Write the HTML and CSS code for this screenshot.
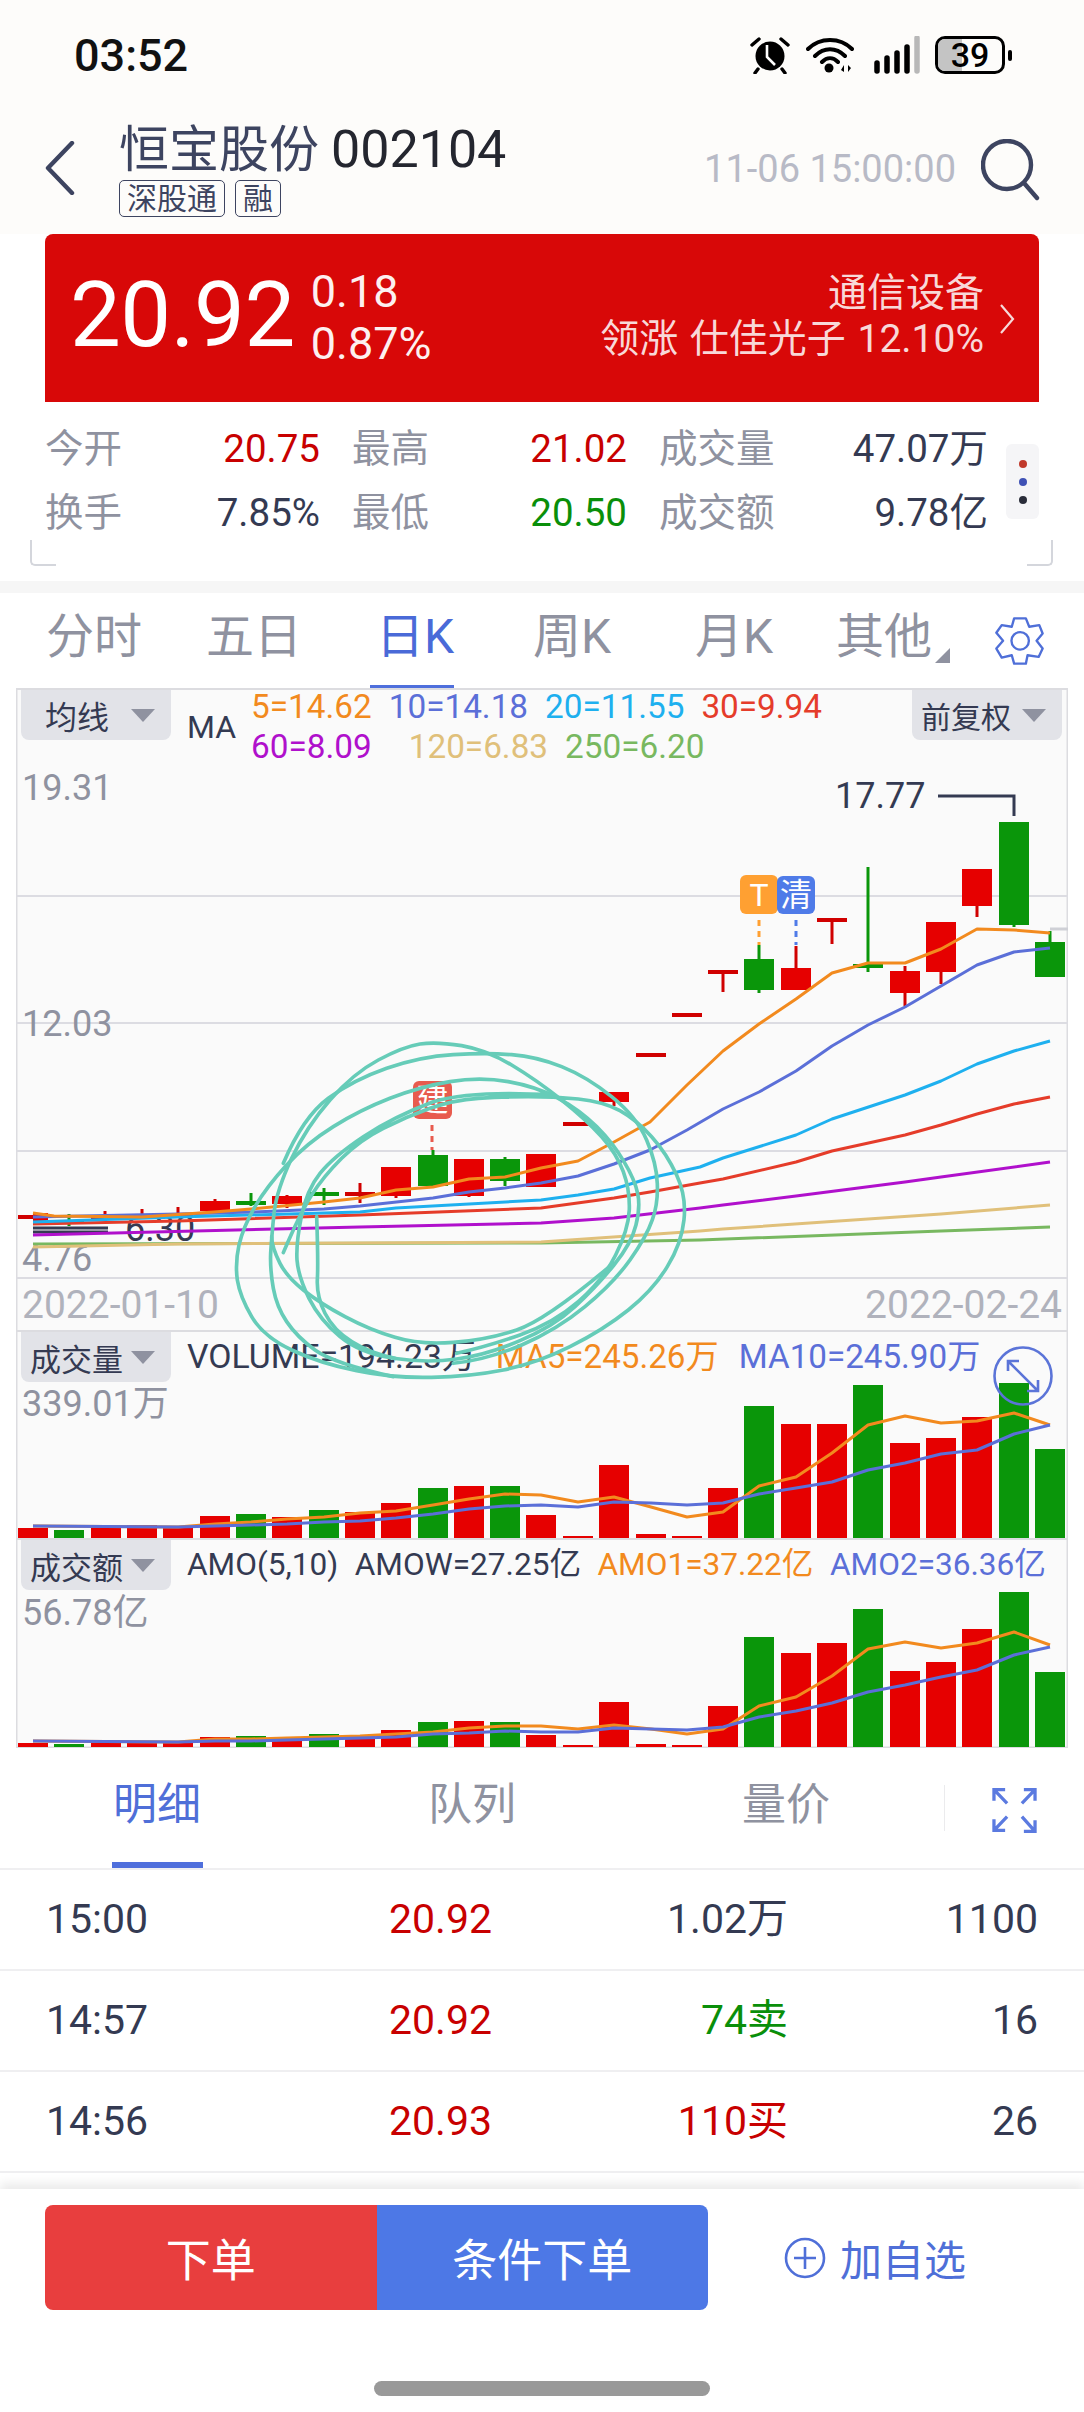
FILE: index.html
```html
<!DOCTYPE html>
<html lang="zh">
<head>
<meta charset="utf-8">
<title>恒宝股份 002104</title>
<link rel="stylesheet" href="styles.css">
</head>
<body>
<div class="page">
  <header class="top">
    <div class="status">
      <span class="clock">03:52</span>
      <div class="status-icons">
        <svg class="ic-alarm" viewBox="0 0 40 38" width="40" height="38">
          <circle cx="20" cy="20" r="14.5" fill="#000"/>
          <path d="M2 9 9 3M38 9 31 3M8 33 5 37M32 33 35 37" stroke="#000" stroke-width="3.4" stroke-linecap="round" fill="none"/>
          <path d="M17 9V21L25 29" stroke="#fff" stroke-width="2.6" fill="none"/>
        </svg>
        <svg class="ic-wifi" viewBox="0 0 48 36" width="48" height="36">
          <path d="M2 12C14 0 34 0 46 12M9 19C18 10 30 10 39 19M16 25C21 20 27 20 32 25" stroke="#000" stroke-width="4" fill="none" stroke-linecap="round"/>
          <circle cx="23" cy="31" r="4.5" fill="#000"/>
          <path d="M35 33 38 28V35ZM42 28 45 31 42 35Z" fill="#000"/>
        </svg>
        <svg class="ic-signal" viewBox="0 0 46 38" width="46" height="38">
          <path class="sig" d="M3 27V35M13 22V35M23 17V35M33 11V35"/>
          <path class="sig sig-off" d="M43 2V35"/>
        </svg>
        <div class="battery">
          <div class="batt-body"><span class="batt-fill"></span><span class="batt-num">39</span></div>
          <span class="batt-nub"></span>
        </div>
      </div>
    </div>
    <div class="nav">
      <svg class="back" viewBox="0 0 30 54" width="30" height="54"><path d="M27 2 3 27 27 52" fill="none" stroke="#3d4460" stroke-width="4.4" stroke-linecap="round" stroke-linejoin="round"/></svg>
      <div class="name-block">
        <div class="name"><span class="name-cn">恒宝股份</span><span class="name-code">002104</span></div>
        <div class="tags"><span class="tag">深股通</span><span class="tag">融</span></div>
      </div>
      <span class="stamp">11-06 15:00:00</span>
      <svg class="search" viewBox="0 0 60 62" width="60" height="62"><circle cx="26" cy="26" r="24" fill="none" stroke="#3d4460" stroke-width="4.4"/><path d="M43 44 56 59" stroke="#3d4460" stroke-width="4.4" stroke-linecap="round"/></svg>
    </div>
  </header>

  <section class="quote">
    <div class="price">20.92</div>
    <div class="change"><span>0.18</span><span>0.87%</span></div>
    <div class="sector"><span>通信设备</span><span class="leader-line">领涨 仕佳光子 12.10%</span></div>
    <svg class="chev" viewBox="0 0 16 32" width="16" height="32"><path d="M2 2 14 16 2 30" fill="none" stroke="#f7d9d9" stroke-width="2.2"/></svg>
  </section>

  <section class="stats">
    <div class="stats-grid">
      <div class="pair"><span class="lbl">今开</span><span class="red">20.75</span></div>
      <div class="pair"><span class="lbl">最高</span><span class="red">21.02</span></div>
      <div class="pair"><span class="lbl">成交量</span><span class="ink">47.07万</span></div>
      <div class="pair"><span class="lbl">换手</span><span class="ink">7.85%</span></div>
      <div class="pair"><span class="lbl">最低</span><span class="green">20.50</span></div>
      <div class="pair"><span class="lbl">成交额</span><span class="ink">9.78亿</span></div>
    </div>
    <div class="dots"><i class="dot d1"></i><i class="dot d2"></i><i class="dot d3"></i></div>
  </section>
  <div class="brackets"><span class="br br-l"></span><span class="br br-r"></span></div>
  <div class="band"></div>

  <nav class="periods">
    <span>分时</span><span>五日</span><span class="on">日K</span><span>周K</span><span>月K</span><span class="more">其他</span>
    <svg class="gear" viewBox="105 45 155 155" width="52" height="52"><polygon points="165,55 200,55 210,80 240,75 250,100 232,122 250,145 238,170 205,165 200,190 165,190 158,165 128,172 112,145 132,122 112,98 128,75 158,80" fill="none" stroke="#4f6fd8" stroke-width="7" stroke-linejoin="round"/><circle cx="183" cy="122" r="26" fill="none" stroke="#4f6fd8" stroke-width="7"/></svg>
  </nav>

  <div class="chart">
    <section class="pane pane-k">
      <svg class="plot" viewBox="16 690 1052 640" width="1052" height="640">
        <path class="grid" d="M16 896H1068M16 1023H1068M16 1151H1068M16 1278H1068"/>
        <path class="grid-now" d="M1050 929H1068"/>
        <text class="axis" x="22" y="800">19.31</text>
        <text class="axis" x="22" y="1036">12.03</text>
        <text class="axis" x="22" y="1271">4.76</text>
        <text class="axis date" x="22" y="1318">2022-01-10</text>
        <text class="axis date" x="1062" y="1318" text-anchor="end">2022-02-24</text>
        <text class="note" x="125" y="1241">6.30</text>
        <path class="leader" d="M33 1228H108M33 1232H108"/>
        <text class="note" x="835" y="808">17.77</text>
        <path class="leader" d="M938 796H1014V816"/>

        <g class="wick-red">
          <path d="M105 1211V1219M142 1209V1217M178 1207V1217M215 1199V1203M287 1195V1208M360 1183V1203M396 1194V1198M469 1194V1197M614 1100V1106M723 971V992M796 946V970M832 919V944M905 966V1006M941 970V984M977 904V917"/>
          <path class="flat" d="M18 1217H48M91 1218H121M127 1216H157M163 1216H193M345 1194H375M563 1124H593M636 1055H666M672 1015H702M708 972H738M817 920H847"/>
        </g>
        <g class="body-red">
          <rect x="33" y="1213" width="15" height="10"/>
          <rect x="200" y="1201" width="30" height="10"/>
          <rect x="272" y="1196" width="30" height="8"/>
          <rect x="381" y="1167" width="30" height="29"/>
          <rect x="454" y="1159" width="30" height="37"/>
          <rect x="526" y="1154" width="30" height="33"/>
          <rect x="599" y="1092" width="30" height="10"/>
          <rect x="781" y="968" width="30" height="22"/>
          <rect x="890" y="971" width="30" height="22"/>
          <rect x="926" y="922" width="30" height="50"/>
          <rect x="962" y="869" width="30" height="37"/>
        </g>
        <g class="wick-green">
          <path d="M69 1214V1226M251 1193V1206M324 1188V1205M433 1150V1156M505 1157V1186M759 945V993M868 867V972M1014 925V927M1050 931V943"/>
          <path class="flat" d="M54 1222H84M236 1203H266M309 1194H339M853 966H883"/>
        </g>
        <g class="body-green">
          <rect x="418" y="1155" width="30" height="31"/>
          <rect x="490" y="1159" width="30" height="22"/>
          <rect x="744" y="959" width="30" height="31"/>
          <rect x="999" y="822" width="30" height="103"/>
          <rect x="1035" y="942" width="30" height="35"/>
        </g>

        <polyline class="ma m250" points="33,1244 541,1243 700,1240 941,1231 1050,1227"/>
        <polyline class="ma m120" points="33,1247 178,1244 541,1242 700,1231 723,1229 941,1214 1050,1205"/>
        <polyline class="ma m60" points="33,1235 360,1227 541,1223 614,1218 700,1208 723,1205 796,1196 905,1182 941,1177 1050,1162"/>
        <polyline class="ma m30" points="33,1224 178,1221 360,1215 541,1208 614,1198 650,1192 700,1183 723,1179 796,1162 832,1151 905,1135 941,1125 977,1114 1014,1104 1050,1097"/>
        <polyline class="ma m20" points="33,1222 178,1217 324,1213 360,1212 396,1208 469,1204 541,1200 578,1195 614,1189 650,1178 700,1167 723,1158 796,1135 832,1119 905,1095 941,1081 977,1064 1014,1051 1050,1041"/>
        <polyline class="ma m10" points="33,1217 178,1214 251,1212 324,1209 360,1206 433,1198 469,1192 505,1188 541,1183 578,1176 614,1164 650,1150 687,1130 723,1109 759,1092 796,1071 832,1046 868,1025 905,1007 941,986 977,965 1014,952 1050,948"/>
        <polyline class="ma m5" points="33,1213 54,1216 142,1217 214,1212 251,1209 324,1202 360,1198 396,1190 433,1187 469,1179 505,1177 541,1168 578,1161 614,1142 650,1122 687,1085 723,1051 759,1024 796,999 832,973 868,963 905,963 941,949 977,929 1014,930 1050,933"/>

        <path class="flag-line l-red" d="M432 1125V1150"/>
        <path class="flag-line l-orange" d="M759 920V945"/>
        <path class="flag-line l-blue" d="M796 920V945"/>
        <rect class="flag f-red" x="413" y="1081" width="39" height="38" rx="6"/>
        <text class="flag-t" x="432.5" y="1111">建</text>
        <rect class="flag f-orange" x="740" y="875" width="38" height="39" rx="6"/>
        <text class="flag-t" x="759" y="906">T</text>
        <rect class="flag f-blue" x="777" y="876" width="38" height="38" rx="6"/>
        <text class="flag-t" x="796" y="906">清</text>

        <g class="scribble" transform="translate(220 1030) scale(.3333)">
          <path d="M190,668 Q240,550 275,495 Q310,440 365,385 Q420,330 490,295 Q560,260 630,235 Q700,210 775,205 Q850,200 925,200 Q1000,200 1075,207 Q1150,215 1200,242 Q1250,270 1295,320 Q1340,370 1370,435 Q1400,500 1392,570 Q1385,640 1342,710 Q1300,780 1225,840 Q1150,900 1050,950 Q950,1000 850,1020 Q750,1040 635,1042 Q520,1045 410,1022 Q300,1000 215,960 Q130,920 95,860 Q60,800 52,750 Q45,700 57,645 Q70,590 105,530 Q140,470 200,405 Q260,340 340,290 Q420,240 510,205 Q600,170 690,155 Q780,140 865,155 Q950,170 1015,205 Q1080,240 1130,290 Q1180,340 1212,395 Q1245,450 1253,490 Q1262,530 1248,585 Q1235,640 1182,705 Q1130,770 1065,830 Q1000,890 900,932 Q800,975 710,987 Q620,1000 520,985 Q420,970 360,920 Q300,870 267,805 Q235,740 231,690 Q228,640 244,560 Q260,480 300,430 Q340,380 430,320 Q520,260 640,215 Q760,180 1000,195"/>
          <path d="M520,1040 Q340,1000 285,960 Q230,920 200,875 Q170,830 160,775 Q150,720 152,670 Q155,620 162,550 Q170,480 215,385 Q260,290 330,210 Q400,130 475,90 Q550,50 600,42 Q650,35 725,47 Q800,60 875,105 Q950,150 1025,210 Q1100,270 1145,320 Q1190,370 1210,425 Q1230,480 1228,540 Q1225,600 1187,675 Q1150,750 1075,815 Q1000,880 900,915 Q800,950 710,970"/>
          <path d="M190,400 Q250,260 325,205 Q400,150 500,115 Q600,80 700,74 Q800,68 875,74 Q950,80 1025,110 Q1100,140 1175,200 Q1250,260 1280,330 Q1310,400 1312,460 Q1315,520 1297,570 Q1280,620 1230,690 Q1180,760 1095,830 Q1010,900 905,945 Q800,990 700,1000"/>
          <path d="M1180,700 Q980,870 890,900 Q800,930 700,937 Q600,945 525,922 Q450,900 375,860 Q300,820 250,780 Q200,740 180,700 Q155,650 155,620"/>
          <path d="M290,560 Q295,700 292,750 Q290,800 315,850 Q340,900 395,935 Q450,970 525,985"/>
        </g>
      </svg>
      <div class="legend">
        <div class="btn btn-wide">均线<i class="tri"></i></div>
        <span class="ma-label">MA</span>
        <div class="ma-vals">
          <div class="ma-row"><span class="c5">5=14.62</span><span class="c10">10=14.18</span><span class="c20">20=11.55</span><span class="c30">30=9.94</span></div>
          <div class="ma-row"><span class="c60">60=8.09</span><span class="c120 push">120=6.83</span><span class="c250">250=6.20</span></div>
        </div>
        <div class="btn btn-right">前复权<i class="tri"></i></div>
      </div>
    </section>

    <section class="pane">
      <svg class="plot" viewBox="16 1332 1052 206" width="1052" height="206">
        <text class="axis" x="22" y="1416">339.01万</text>
        <path class="bar-red" d="M33 1528V1538M106 1527V1538M142 1525V1538M178 1527V1538M215 1516V1538M287 1517V1538M360 1512V1538M396 1503V1538M469 1486V1538M541 1515V1538M578 1536V1538M614 1465V1538M651 1534V1538M687 1536V1538M723 1488V1538M796 1424V1538M832 1424V1538M905 1443V1538M941 1438V1538M977 1417V1538"/>
        <path class="bar-green" d="M69 1530V1538M251 1514V1538M324 1510V1538M433 1488V1538M505 1486V1538M759 1406V1538M868 1385V1538M1014 1383V1538M1050 1449V1538"/>
        <polyline class="ma m5" points="33,1526 178,1527 215,1524 251,1522 287,1519 324,1517 360,1513 396,1511 433,1505 469,1499 505,1494 541,1495 578,1502 614,1497 651,1507 687,1517 723,1512 759,1486 796,1477 832,1453 868,1425 905,1416 941,1423 977,1421 1014,1413 1050,1425"/>
        <polyline class="ma m10" points="33,1526 178,1527 215,1526 251,1525 287,1524 324,1522 360,1521 396,1518 433,1514 469,1509 505,1506 541,1505 578,1507 614,1502 651,1503 687,1505 723,1503 759,1494 796,1488 832,1482 868,1470 905,1463 941,1454 977,1450 1014,1434 1050,1425"/>
        <g class="zoom-ic">
          <circle cx="1023" cy="1376" r="28.5"/>
          <path d="M1008 1361 1038 1391M1008 1371V1361H1019M1038 1380V1391H1027"/>
        </g>
      </svg>
      <div class="legend">
        <div class="btn">成交量<i class="tri"></i></div>
        <div class="inds inds-vol">
          <span class="ink vol-now">VOLUME=194.23万</span><span class="c5">MA5=245.26万</span><span class="c10">MA10=245.90万</span>
        </div>
      </div>
    </section>

    <section class="pane pane-last">
      <svg class="plot" viewBox="16 1540 1052 208" width="1052" height="208">
        <text class="axis" x="22" y="1625">56.78亿</text>
        <path class="bar-red" d="M33 1743V1747M106 1743V1747M142 1743V1747M178 1743V1747M215 1737V1747M287 1738V1747M360 1736V1747M396 1730V1747M469 1721V1747M541 1735V1747M578 1745V1747M614 1702V1747M651 1744V1747M687 1745V1747M723 1706V1747M796 1653V1747M832 1643V1747M905 1671V1747M941 1662V1747M977 1629V1747"/>
        <path class="bar-green" d="M69 1744V1747M251 1736V1747M324 1734V1747M433 1722V1747M505 1722V1747M759 1637V1747M868 1609V1747M1014 1592V1747M1050 1672V1747"/>
        <polyline class="ma m5" points="33,1741 178,1742 215,1739 251,1739 287,1738 324,1737 360,1736 396,1734 433,1732 469,1728 505,1726 541,1726 578,1729 614,1725 651,1729 687,1734 723,1729 759,1706 796,1697 832,1676 868,1649 905,1642 941,1648 977,1643 1014,1632 1050,1645"/>
        <polyline class="ma m10" points="33,1741 178,1742 215,1741 251,1741 287,1740 324,1739 360,1738 396,1737 433,1734 469,1733 505,1731 541,1732 578,1732 614,1728 651,1729 687,1730 723,1727 759,1717 796,1711 832,1703 868,1692 905,1685 941,1677 977,1670 1014,1655 1050,1647"/>
      </svg>
      <div class="legend">
        <div class="btn">成交额<i class="tri"></i></div>
        <div class="inds inds-amo">
          <span class="ink">AMO(5,10)</span><span class="ink">AMOW=27.25亿</span><span class="c5">AMO1=37.22亿</span><span class="c10">AMO2=36.36亿</span>
        </div>
      </div>
    </section>
  </div>

  <nav class="sub-tabs">
    <span class="on">明细</span><span>队列</span><span>量价</span>
    <div class="expand">
      <svg viewBox="160 30 135 140" width="45" height="46"><path d="M205 80 165 38M165 72V38H199M250 80 290 38M290 72V38H256M205 120 165 162M165 128V162H199M250 120 290 165M290 131V165H256" fill="none" stroke="#5b7ae0" stroke-width="10"/></svg>
    </div>
  </nav>

  <div class="ticks">
    <div class="tick"><span class="ink">15:00</span><span class="red">20.92</span><span class="ink">1.02万</span><span class="ink">1100</span></div>
    <div class="tick"><span class="ink">14:57</span><span class="red">20.92</span><span class="green">74卖</span><span class="ink">16</span></div>
    <div class="tick"><span class="ink">14:56</span><span class="red">20.93</span><span class="red">110买</span><span class="ink">26</span></div>
  </div>

  <footer class="foot">
    <div class="actions">
      <div class="order">
        <span class="buy">下单</span><span class="cond">条件下单</span>
      </div>
      <div class="watch">
        <svg viewBox="0 0 42 42" width="42" height="42"><circle cx="21" cy="21" r="19" fill="none" stroke="#4f6fd8" stroke-width="2.6"/><path d="M21 10V32M10 21H32" stroke="#4f6fd8" stroke-width="2.6"/></svg>
        <span>加自选</span>
      </div>
    </div>
    <div class="home"></div>
  </footer>
</div>
</body>
</html>
```
FILE: styles.css
```css
* { box-sizing: border-box; }
html, body { margin: 0; padding: 0; background: #fff; }
body { font-family: Roboto, "Noto Sans CJK SC", sans-serif; color: #343a52; }
.page { width: 1084px; height: 2412px; overflow: hidden; }
i { display: block; font-style: normal; }

.red { color: #c80000; }
.green { color: #0a8f0a; }
.ink { color: #343a52; }

/* top */
.top { background: #fdfcfa; height: 234px; }
.status { height: 110px; display: flex; align-items: center; justify-content: space-between; padding: 0 74px; }
.clock { font-size: 45px; font-weight: 500; color: #111; }
.status-icons { display: flex; align-items: center; gap: 14px; margin-right: -2px; }
.ic-alarm { margin-right: 2px; }
.ic-wifi { margin-right: 6px; }
.sig { stroke: #000; stroke-width: 5.5; stroke-linecap: round; fill: none; }
.sig-off { stroke: #b8b8b8; }
.battery { display: flex; align-items: center; gap: 3px; margin-left: 1px; }
.batt-body { width: 70px; height: 38px; border: 3px solid #000; border-radius: 10px; position: relative; display: flex; align-items: center; justify-content: center; overflow: hidden; }
.batt-fill { position: absolute; left: 0; top: 0; bottom: 0; width: 38%; background: #c4c4c4; }
.batt-num { position: relative; font-size: 34px; font-weight: 500; color: #000; line-height: 1; }
.batt-nub { width: 4px; height: 11px; background: #000; border-radius: 2px; }

.nav { height: 124px; display: flex; align-items: flex-start; padding-left: 45px; }
.back { margin-top: 31px; flex: none; }
.name-block { margin-left: 44px; }
.name { display: flex; align-items: baseline; gap: 12px; line-height: 58px; margin-top: 11px; }
.name-cn { font-size: 50px; color: #3d4460; }
.name-code { font-size: 52px; color: #24262f; }
.tags { display: flex; gap: 10px; margin-top: 1px; }
.tag { height: 37px; padding: 0 7px; font-size: 30px; line-height: 35px; border: 1px solid #3d4460; border-radius: 5px; color: #3d4460; }
.stamp { margin-left: auto; margin-top: 37px; font-size: 38px; line-height: 44px; color: #b8bac6; }
.search { margin: 29px 43px 0 25px; flex: none; }

/* quote */
.quote { height: 168px; margin: 0 45px; background: #d80808; border-radius: 8px 8px 0 0; display: flex; align-items: flex-start; color: #fff; padding-left: 25px; }
.price { font-size: 90.5px; line-height: 108px; margin-top: 27px; letter-spacing: -.5px; }
.change { display: flex; flex-direction: column; margin: 32px 0 0 16px; font-size: 45px; line-height: 52px; color: #fdf0f0; }
.sector { margin-left: auto; margin-top: 36px; display: flex; flex-direction: column; align-items: flex-end; font-size: 39px; line-height: 46px; color: #f8d8d8; }
.leader-line { word-spacing: 2px; }
.chev { margin: 69px 24px 0 15px; flex: none; }

/* stats */
.stats { display: flex; align-items: flex-start; padding: 25px 45px 0 45px; height: 138px; }
.stats-grid { display: grid; grid-template-columns: 275px 275px 329px; column-gap: 32px; row-gap: 20px; width: 943px; }
.pair { display: flex; justify-content: space-between; font-size: 38.5px; line-height: 44px; }
.lbl { color: #8f92a0; }
.dots { margin: 17px 0 0 18px; width: 33px; height: 75px; background: #f5f5f7; border-radius: 6px; display: flex; flex-direction: column; align-items: center; justify-content: center; gap: 10px; }
.dot { width: 8px; height: 8px; border-radius: 50%; }
.d1 { background: #c0392b; }
.d2 { background: #3f51b5; }
.d3 { background: #2a2d3a; }
.brackets { height: 26px; display: flex; justify-content: space-between; padding: 0 31px 0 30px; }
.br { width: 26px; height: 26px; border-bottom: 2px solid #d4d6dc; }
.br-l { border-left: 2px solid #d4d6dc; border-bottom-left-radius: 5px; }
.br-r { border-right: 2px solid #d4d6dc; border-bottom-right-radius: 5px; }
.band { height: 12px; margin-top: 15px; background: #f6f6f6; }

/* period tabs */
.periods { height: 95px; display: grid; grid-template-columns: 160px 170px 157px 162px 141px 158px auto; align-items: center; padding: 0 0 8px 46px; font-size: 48px; line-height: 56px; color: #8f92a0; }
.periods span { justify-self: start; }
.periods .on { color: #4a6ad8; position: relative; }
.periods .on::after { content: ""; position: absolute; left: -6px; width: 84px; height: 5px; bottom: -25px; background: #4f6fdc; }
.more { position: relative; }
.more::after { content: ""; position: absolute; right: -18px; bottom: 2px; border-style: solid; border-width: 0 0 15px 15px; border-color: transparent transparent #8f92a0 transparent; }
.gear { margin-top: 8px; }

/* chart */
.chart { width: 1052px; height: 1060px; margin-left: 16px; background: #fafafa; box-shadow: inset 0 0 0 1.5px #dcdce0; }
.pane { display: grid; height: 208px; border-top: 2px solid #dcdce0; }
.pane-k { height: 642px; position: relative; z-index: 2; }
.pane-last { height: 210px; }
.plot { grid-area: 1 / 1; display: block; overflow: visible; }
.legend { grid-area: 1 / 1; display: flex; align-items: flex-start; padding-left: 5px; font-size: 32px; }
.btn { width: 150px; height: 50px; background: #e2e3e8; border-radius: 0 0 8px 8px; display: flex; align-items: center; justify-content: space-between; padding: 0 16px 0 9px; font-size: 31px; color: #343a52; flex: none; }
.btn-wide { padding-left: 24px; font-size: 32px; }
.btn-right { margin: 0 6px 0 auto; font-size: 30px; }
.tri { width: 0; height: 0; border-style: solid; border-width: 13px 12px 0 12px; border-color: #8f92a0 transparent transparent transparent; }
.ma-label { margin: 17px 0 0 16px; line-height: 40px; color: #343a52; }
.ma-vals { margin: -3px 0 0 15px; line-height: 40px; font-size: 33.3px; }
.ma-row { display: flex; gap: 17px; }
.push { margin-left: 20px; }
.c5 { color: #f28a1e; }
.c10 { color: #5b6fd8; }
.c20 { color: #1eb0ef; }
.c30 { color: #e53c2a; }
.c60 { color: #b010cc; }
.c120 { color: #e0c07a; }
.c250 { color: #78b860; }
.inds { display: flex; margin-left: 16px; line-height: 50px; }
.inds-vol { gap: 20px; font-size: 33.2px; }
.vol-now { font-size: 33.8px; }
.inds-amo { gap: 16.5px; font-size: 31.6px; }

.grid { stroke: #dcdce2; stroke-width: 2; fill: none; }
.grid-now { stroke: #cfd0d6; stroke-width: 3; fill: none; }
.axis { font-family: Roboto, "Noto Sans CJK SC", sans-serif; font-size: 36px; fill: #8f92a0; }
.date { font-size: 39px; fill: #b0b2bc; }
.note { font-family: Roboto, sans-serif; font-size: 36px; fill: #343a52; }
.leader { stroke: #343a52; stroke-width: 3; fill: none; }
.wick-red path { stroke: #d00000; stroke-width: 3; fill: none; }
.wick-red .flat { stroke-width: 4; }
.wick-green path { stroke: #0a960a; stroke-width: 3; fill: none; }
.wick-green .flat { stroke-width: 4; }
.body-red rect { fill: #e60000; }
.body-green rect { fill: #0a960a; }
.ma { fill: none; stroke-width: 3; stroke-linejoin: round; }
.m5 { stroke: #f28a1e; }
.m10 { stroke: #5b6fd8; }
.m20 { stroke: #1eb0ef; }
.m30 { stroke: #e53c2a; }
.m60 { stroke: #b010cc; }
.m120 { stroke: #e0c07a; }
.m250 { stroke: #78b860; }
.flag-line { stroke-width: 3; stroke-dasharray: 6 5; fill: none; }
.l-red { stroke: #e85b4e; }
.l-orange { stroke: #ffa032; }
.l-blue { stroke: #4f7be8; }
.f-red { fill: #e85b4e; }
.f-orange { fill: #ffa032; }
.f-blue { fill: #4f7be8; }
.flag-t { font-family: Roboto, "Noto Sans CJK SC", sans-serif; font-size: 32px; fill: #fff; text-anchor: middle; }
.scribble path { fill: none; stroke: #66ccb8; stroke-width: 11; stroke-linecap: round; }
.bar-red { stroke: #e60000; stroke-width: 30; fill: none; }
.bar-green { stroke: #0a960a; stroke-width: 30; fill: none; }
.zoom-ic circle, .zoom-ic path { fill: none; stroke: #5b74d8; stroke-width: 2.6; }

/* detail tabs */
.sub-tabs { height: 122px; display: grid; grid-template-columns: 315px 314px 202px auto; padding-left: 113px; align-items: start; font-size: 44px; line-height: 56px; color: #8f92a0; border-bottom: 2px solid #efeff1; }
.sub-tabs > span { margin-top: 29px; justify-self: start; }
.sub-tabs .on { color: #4f6fd8; position: relative; }
.sub-tabs .on::after { content: ""; position: absolute; left: -1px; width: 91px; height: 6px; top: 85px; background: #4f6fdc; }
.expand { margin-top: 37px; height: 46px; border-left: 1.5px solid #ebebed; padding-left: 47px; }
.expand svg { display: block; margin-top: 2px; }

.tick { height: 101px; display: grid; grid-template-columns: 151px 295px 296px 250px; padding: 0 46px 2px 46px; border-bottom: 2px solid #efeff1; align-items: center; font-size: 41px; line-height: 48px; text-align: right; }
.tick span:first-child { text-align: left; }

/* footer */
.foot { margin-top: 16px; background: #fff; box-shadow: 0 -6px 9px rgba(0,0,0,.08); height: 224px; }
.actions { display: flex; padding: 16px 0 0 45px; align-items: center; }
.order { display: flex; width: 663px; height: 105px; border-radius: 8px; overflow: hidden; color: #fff; font-size: 45px; }
.buy, .cond { display: flex; align-items: center; justify-content: center; flex: 1; }
.buy { background: #e83e3e; }
.cond { background: #4d78e6; }
.watch { display: flex; align-items: center; gap: 14px; margin-left: 76px; color: #4f6fd8; font-size: 42px; }
.watch svg { display: block; }
.home { width: 336px; height: 15px; margin: 71px 0 0 374px; background: #999; border-radius: 8px; }
```
